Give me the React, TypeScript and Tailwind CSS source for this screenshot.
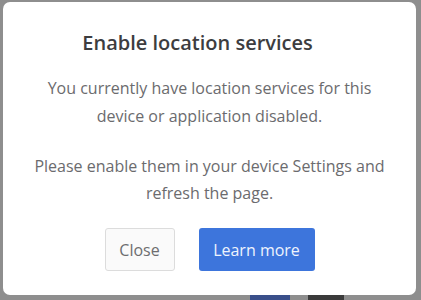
import React from 'react';

const App: React.FC = () => {
  return (
    <div className="relative w-[421px] h-[300px] overflow-hidden bg-[#8e8e8e] pt-[2px] pl-[3px]">
      {/* blurred page behind the dialog */}
      <div className="absolute bottom-0 left-[250px] w-[40px] h-[5px] bg-[#3a4f8a]" />
      <div className="absolute bottom-0 left-[308px] w-[36px] h-[5px] bg-[#3b3b3b]" />

      <div className="relative w-[413px] h-[293px] bg-white rounded-[7px] flex flex-col items-center font-['Open_Sans',sans-serif]">
        <h2 className="mt-[27px] mr-[24px] text-[20px] leading-[28px] font-semibold text-[#3d3d3f]">
          Enable location services
        </h2>
        <p className="mt-[18px] text-[16px] leading-[27.5px] text-[#6b6b6e] text-center px-[30px]">
          You currently have location services for this device or application disabled.
        </p>
        <p className="mt-[23px] text-[16px] leading-[26.5px] text-[#6b6b6e] text-center px-[30px]">
          Please enable them in your device Settings and refresh the page.
        </p>
        <div className="mt-[22px] flex gap-[24px]">
          <button className="w-[70px] h-[43px] rounded-[3px] border border-[#dcdcdc] bg-[#fafafa] text-[16px] text-[#6d6d6f]">
            Close
          </button>
          <button className="w-[116px] h-[43px] rounded-[3px] bg-[#3d75dc] text-[16px] font-medium text-[#eef3fc]">
            Learn more
          </button>
        </div>
      </div>
    </div>
  );
};

export default App;
